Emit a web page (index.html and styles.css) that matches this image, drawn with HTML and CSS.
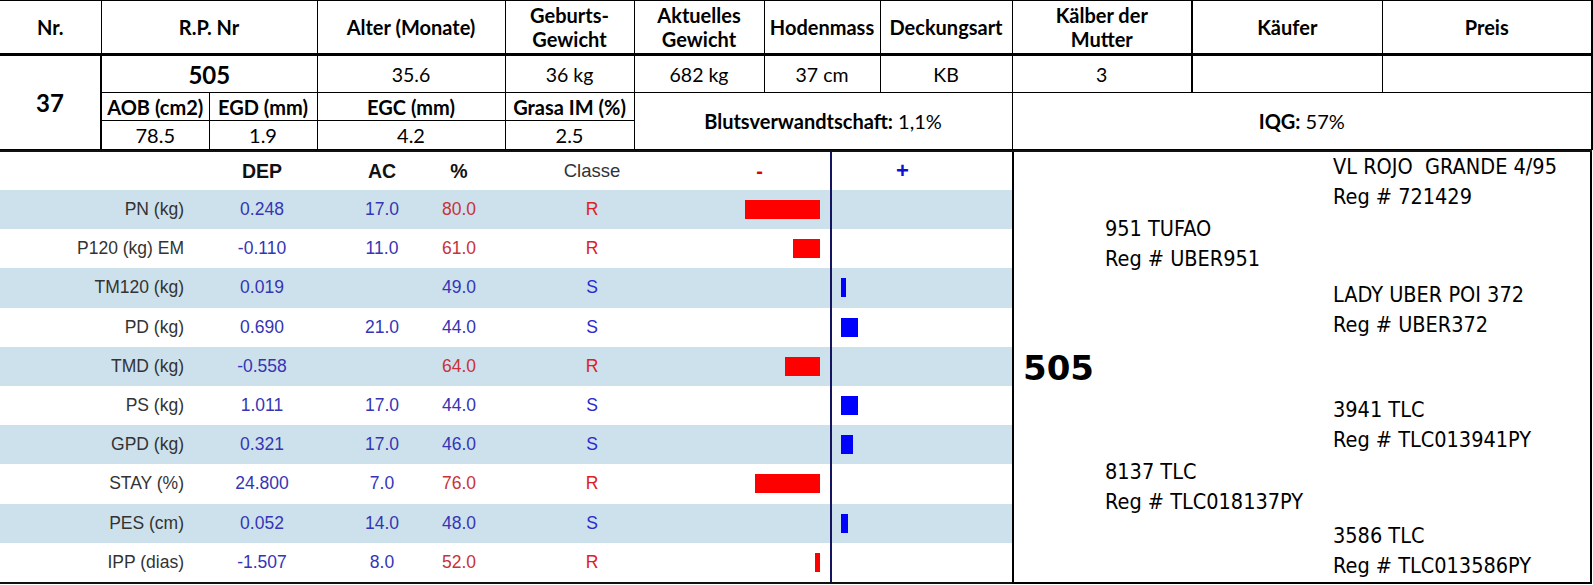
FILE: index.html
```html
<!DOCTYPE html>
<html lang="de">
<head>
<meta charset="utf-8">
<title>Stier 505</title>
<link rel="stylesheet" href="styles.css">
</head>
<body>
<table class="info">
  <colgroup>
    <col class="w-nr"><col class="w-aob"><col class="w-egd"><col class="w-alter"><col class="w-geb">
    <col class="w-akt"><col class="w-hod"><col class="w-deck"><col class="w-kalb"><col class="w-kauf"><col class="w-preis">
  </colgroup>
  <tr class="hdr">
    <th class="first">Nr.</th>
    <th colspan="2">R.P. Nr</th>
    <th>Alter (Monate)</th>
    <th>Geburts-<br>Gewicht</th>
    <th>Aktuelles<br>Gewicht</th>
    <th>Hodenmass</th>
    <th>Deckungsart</th>
    <th class="thick-r">Kälber der<br>Mutter</th>
    <th>Käufer</th>
    <th class="last">Preis</th>
  </tr>
  <tr class="r2">
    <td rowspan="3" class="first big nrcell">37</td>
    <td colspan="2" class="big">505</td>
    <td>35.6</td>
    <td>36 kg</td>
    <td>682 kg</td>
    <td>37 cm</td>
    <td>KB</td>
    <td class="thick-r">3</td>
    <td></td>
    <td class="last"></td>
  </tr>
  <tr class="r3">
    <th>AOB (cm2)</th>
    <th>EGD (mm)</th>
    <th>EGC (mm)</th>
    <th>Grasa IM (%)</th>
    <td colspan="3" rowspan="2" class="summary"><b>Blutsverwandtschaft:</b> 1,1%</td>
    <td colspan="3" rowspan="2" class="summary last"><b>IQG:</b> 57%</td>
  </tr>
  <tr class="r4">
    <td>78.5</td>
    <td>1.9</td>
    <td>4.2</td>
    <td>2.5</td>
  </tr>
</table>

<div class="lower">
  <div class="traits">
    <div class="row head">
      <span></span>
      <span class="num">DEP</span>
      <span class="num">AC</span>
      <span class="num">%</span>
      <span class="cls">Classe</span>
      <span class="neg"><span class="minus">-</span></span>
      <span class="pos"><span class="plus">+</span></span>
    </div>
    <div class="row band">
      <span class="lbl">PN (kg)</span><span class="num blue">0.248</span><span class="num blue">17.0</span><span class="num red">80.0</span><span class="cls red">R</span>
      <span class="neg"><i class="bar r" style="width:75px"></i></span><span class="pos"></span>
    </div>
    <div class="row">
      <span class="lbl">P120 (kg) EM</span><span class="num blue">-0.110</span><span class="num blue">11.0</span><span class="num red">61.0</span><span class="cls red">R</span>
      <span class="neg"><i class="bar r" style="width:27px"></i></span><span class="pos"></span>
    </div>
    <div class="row band">
      <span class="lbl">TM120 (kg)</span><span class="num blue">0.019</span><span class="num blue"></span><span class="num blue">49.0</span><span class="cls blue">S</span>
      <span class="neg"></span><span class="pos"><i class="bar b" style="width:5px"></i></span>
    </div>
    <div class="row">
      <span class="lbl">PD (kg)</span><span class="num blue">0.690</span><span class="num blue">21.0</span><span class="num blue">44.0</span><span class="cls blue">S</span>
      <span class="neg"></span><span class="pos"><i class="bar b" style="width:17px"></i></span>
    </div>
    <div class="row band">
      <span class="lbl">TMD (kg)</span><span class="num blue">-0.558</span><span class="num blue"></span><span class="num red">64.0</span><span class="cls red">R</span>
      <span class="neg"><i class="bar r" style="width:35px"></i></span><span class="pos"></span>
    </div>
    <div class="row">
      <span class="lbl">PS (kg)</span><span class="num blue">1.011</span><span class="num blue">17.0</span><span class="num blue">44.0</span><span class="cls blue">S</span>
      <span class="neg"></span><span class="pos"><i class="bar b" style="width:17px"></i></span>
    </div>
    <div class="row band">
      <span class="lbl">GPD (kg)</span><span class="num blue">0.321</span><span class="num blue">17.0</span><span class="num blue">46.0</span><span class="cls blue">S</span>
      <span class="neg"></span><span class="pos"><i class="bar b" style="width:12px"></i></span>
    </div>
    <div class="row">
      <span class="lbl">STAY (%)</span><span class="num blue">24.800</span><span class="num blue">7.0</span><span class="num red">76.0</span><span class="cls red">R</span>
      <span class="neg"><i class="bar r" style="width:65px"></i></span><span class="pos"></span>
    </div>
    <div class="row band">
      <span class="lbl">PES (cm)</span><span class="num blue">0.052</span><span class="num blue">14.0</span><span class="num blue">48.0</span><span class="cls blue">S</span>
      <span class="neg"></span><span class="pos"><i class="bar b" style="width:7px"></i></span>
    </div>
    <div class="row">
      <span class="lbl">IPP (dias)</span><span class="num blue">-1.507</span><span class="num blue">8.0</span><span class="num red">52.0</span><span class="cls red">R</span>
      <span class="neg"><i class="bar r" style="width:5px"></i></span><span class="pos"></span>
    </div>
  </div>

  <div class="pedigree">
    <div class="subject">505</div>
    <div class="parents">
      <div class="anc p1">951 TUFAO<br>Reg # UBER951</div>
      <div class="anc p2">8137 TLC<br>Reg # TLC018137PY</div>
    </div>
    <div class="grands">
      <div class="anc g1">VL ROJO&nbsp; GRANDE 4/95<br>Reg # 721429</div>
      <div class="anc g2">LADY UBER POI 372<br>Reg # UBER372</div>
      <div class="anc g3">3941 TLC<br>Reg # TLC013941PY</div>
      <div class="anc g4">3586 TLC<br>Reg # TLC013586PY</div>
    </div>
  </div>
</div>
</body>
</html>
```

FILE: styles.css
```css
html, body {
  margin: 0;
  padding: 0;
  background: #fff;
}

/* ---------- top info table ---------- */
.info {
  border-collapse: collapse;
  table-layout: fixed;
  width: 1592px;
  font-family: Lato, "Open Sans", sans-serif;
  color: #000;
}
.w-nr { width: 101px; }
.w-aob { width: 108px; }
.w-egd { width: 108px; }
.w-alter { width: 188px; }
.w-geb { width: 129px; }
.w-akt { width: 130px; }
.w-hod { width: 116px; }
.w-deck { width: 132px; }
.w-kalb { width: 180px; }
.w-kauf { width: 190px; }
.w-preis { width: 210px; }

.info th,
.info td {
  border: 1px solid #000;
  padding: 0;
  text-align: center;
  vertical-align: middle;
  white-space: nowrap;
  overflow: hidden;
}
.info .first { border-left: none; }
.info .last { border-right: 2px solid #000; }
.info .thick-r { border-right: 2px solid #000; }
.info .nrcell { border-right: 2px solid #000; }

.hdr th {
  height: 52px;
  font-size: 20px;
  font-weight: 700;
  line-height: 24px;
  border-bottom: 3px solid #000;
}
.r2 td {
  height: 36px;
  font-size: 19.5px;
}
.r2 td.big {
  font-size: 24px;
  font-weight: 700;
}
.r3 th {
  height: 27px;
  font-size: 20px;
  font-weight: 700;
  line-height: 22px;
}
.r4 td {
  height: 28px;
  font-size: 20px;
  line-height: 22px;
}
.summary {
  font-size: 20px;
}
.summary b { font-weight: 700; }

/* ---------- lower area ---------- */
.lower {
  display: flex;
  width: 1592px;
  border-top: 2px solid #111;
}

.traits {
  width: 1012px;
  flex: none;
  font-family: "Liberation Sans Narrow", "Arial Narrow", "Liberation Sans", sans-serif;
  font-size: 17.5px;
  border-bottom: 2px solid #111;
}
.row {
  display: grid;
  grid-template-columns: 199px 126px 114px 40px 226px 125px 182px;
  height: 39.2px;
  align-items: stretch;
}
.row > span {
  display: flex;
  align-items: center;
}
.row.head {
  height: 38px;
}
.row.band {
  background: #cde1ec;
}
.lbl {
  justify-content: flex-end;
  padding-right: 15px;
  color: #333;
}
.num,
.cls {
  justify-content: center;
}
.head .num {
  font-weight: 700;
  font-size: 19.5px;
  color: #111;
}
.head .cls {
  font-size: 18.5px;
  color: #333;
}
.blue { color: #3535b5; }
.red { color: #c8323a; }
.cls.red { color: #e02020; }
.cls.blue { color: #2a2ad0; }

.neg {
  justify-content: flex-end;
  padding-right: 10px;
}
.pos {
  border-left: 2px solid #141460;
  padding-left: 9px;
}
.minus {
  color: #e00000;
  font-weight: 700;
  font-size: 20px;
  margin-right: 57px;
}
.plus {
  color: #1010d0;
  font-weight: 700;
  font-size: 22px;
  margin-left: 55px;
}
.bar {
  display: block;
  height: 19px;
}
.bar.r { background: #ff0000; }
.bar.b { background: #0000ff; }

/* ---------- pedigree ---------- */
.pedigree {
  flex: none;
  width: 576px;
  border: 2px solid #000;
  border-top: none;
  display: grid;
  grid-template-columns: 91px 228px 1fr;
  height: 430px;
  font-family: "DejaVu Sans Condensed", "Liberation Sans Narrow", "DejaVu Sans", sans-serif;
  font-stretch: condensed;
  font-size: 21.5px;
  line-height: 30px;
  color: #000;
}
.subject {
  display: flex;
  align-items: center;
  padding-left: 9px;
  font-family: "DejaVu Sans", sans-serif;
  font-stretch: normal;
  font-weight: 700;
  font-size: 34px;
  padding-top: 2px;
}
.anc {
  white-space: nowrap;
}
.p1 { margin-top: 62px; }
.p2 { margin-top: 183px; }
.g1 { margin-top: 0; }
.g2 { margin-top: 68px; }
.g3 { margin-top: 55px; }
.g4 { margin-top: 66px; }
```
